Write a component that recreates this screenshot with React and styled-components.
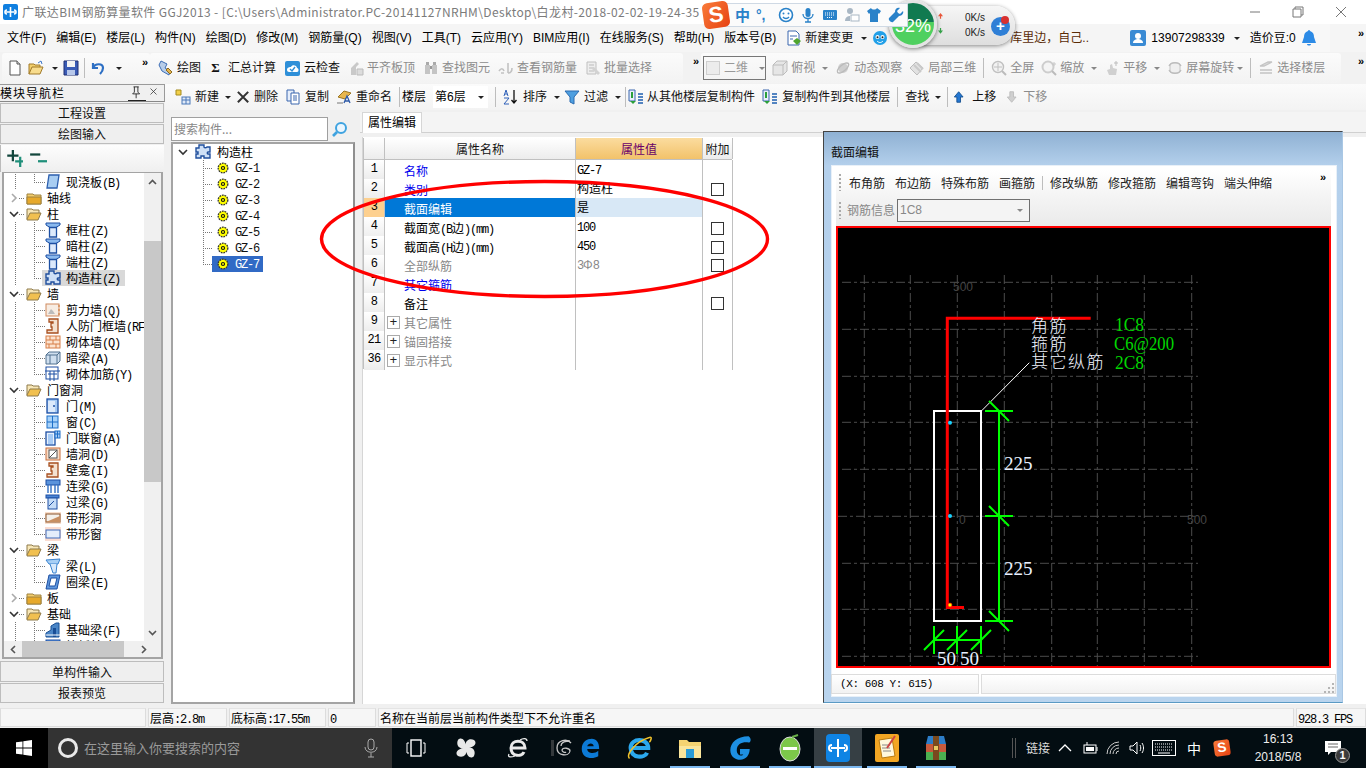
import React from 'react';
import styled, { createGlobalStyle } from 'styled-components';

const UI = '"Liberation Sans","Noto Sans CJK SC",sans-serif';
const CJK = '"Noto Sans CJK SC",sans-serif';

const Global = createGlobalStyle`
  html,body{margin:0;padding:0;width:1366px;height:768px;overflow:hidden;background:#f0f0f0;}
  *{box-sizing:border-box;}
`;

const Screen = styled.div`
  position:relative;width:1366px;height:768px;overflow:hidden;display:flex;flex-direction:column;
  font:12px/16px ${UI};color:#000;background:#f0f0f0;white-space:nowrap;
`;
const Latin = styled.span`font-family:"Liberation Mono",monospace;font-size:12px;letter-spacing:-1.2px;`;
const mix = (s) => s.split(/([\x00-\x7f]+)/).map((p, i) => (i % 2 ? <Latin key={i}>{p}</Latin> : p));

/* ---------- icons ---------- */
const Svg = styled.svg`flex:none;display:block;`;
const I = {
  file:<><path d="M3 1h7l3 3v11H3z" fill="#fff" stroke="#555"/><path d="M10 1v3h3" fill="#ddd" stroke="#555"/></>,
  open:<><path d="M1 14V4h5l1 1h5v2" fill="#f2cf6c" stroke="#a17a2a"/><path d="M1 14l3-7h11l-3 7z" fill="#f8dc8d" stroke="#a17a2a"/><path d="M10 3l3-2 1 3" fill="none" stroke="#3f78c9"/></>,
  save:<><path d="M1 1h14v14H1z" fill="#3a5bb5" stroke="#1f2f72"/><path d="M4 1h8v6H4z" fill="#f3f3f3"/><path d="M4 10h8v5H4z" fill="#b8c8ea"/></>,
  undo:<path d="M3 3v5h5M3 8c2-5 10-5 10 0 0 2-1 4-3 6" fill="none" stroke="#2d6fc4" strokeWidth="2.2"/>,
  draw:<><path d="M3 1l6 3-2 4 5 3-1 4-7-4-3-6z" fill="#b7cde9" stroke="#3b6cb4"/><path d="M10 8l4 4-2 2-4-4z" fill="#e3b34d" stroke="#8d6a1c"/></>,
  cloud:<><rect x="1" y="1" width="15" height="15" rx="2" fill="#2e8fd8"/><path d="M3 10c0-3 3-3 4-3 1-3 6-2 6 1 2 0 2 4 0 4H5c-1 0-2-1-2-2z" fill="#fff"/><path d="M6 9l2 2 3-4" fill="none" stroke="#2e8fd8" strokeWidth="1.4"/></>,
  align:<><path d="M3 15V8l6-6 2 2-3 3v8z" fill="#c9c9c9"/><path d="M9 9h6v6H9z" fill="#dcdcdc" stroke="#bbb"/></>,
  binoc:<><rect x="2" y="5" width="5" height="9" fill="#c4c4c4"/><rect x="9" y="5" width="5" height="9" fill="#c4c4c4"/><rect x="3" y="2" width="3" height="3" fill="#aaa"/><rect x="10" y="2" width="3" height="3" fill="#aaa"/><rect x="7" y="6" width="2" height="3" fill="#999"/></>,
  rebarq:<path d="M1 11c2-3 4-3 5 0M3 13h3M10 3v10M10 13c3 0 4-2 4-5" fill="none" stroke="#c2c2c2" strokeWidth="1.6"/>,
  batch:<><path d="M2 2h9v12H2z" fill="#eee" stroke="#c0c0c0"/><path d="M4 5h5M4 8h5M4 11h5" stroke="#bbb"/><path d="M9 7l6 6-2 2-6-6z" fill="#d2d2d2"/></>,
  cube:<><path d="M1 5l4-4h10v10l-4 4H1z" fill="#e6e6e6" stroke="#bcbcbc"/><path d="M1 5h10v10M11 5l4-4" fill="none" stroke="#bcbcbc"/></>,
  orbit:<><circle cx="8" cy="8" r="5" fill="#cfcfcf"/><ellipse cx="8" cy="8" rx="7" ry="3" transform="rotate(-40 8 8)" fill="none" stroke="#bbb" strokeWidth="1.4"/></>,
  local3d:<><path d="M1 8l6-6 7 6-6 7z" fill="#e2e2e2" stroke="#bcbcbc"/><path d="M5 5l7 7M8 3l6 6" stroke="#c9c9c9" strokeWidth="2"/></>,
  fit:<><circle cx="7" cy="7" r="5.5" fill="#f2f2f2" stroke="#c0c0c0" strokeWidth="1.4"/><path d="M7 3v8M3 7h8" stroke="#c0c0c0"/><path d="M11 11l4 4" stroke="#bbb" strokeWidth="2"/></>,
  zoom:<><circle cx="7" cy="7" r="5.5" fill="#f4f4f4" stroke="#cdcdcd" strokeWidth="2"/><path d="M11 11l4 4" stroke="#bbb" strokeWidth="2"/><path d="M13 2v4M11 4h4" stroke="#c8c8c8"/></>,
  pan:<><path d="M5 15l-2-5 3-1V5l2-1 1 4 4 1-1 6z" fill="#d0d0d0"/><path d="M12 1v5M10 3h4" stroke="#bdbdbd"/></>,
  rotate:<><rect x="3" y="3" width="10" height="10" rx="2" fill="#efefef" stroke="#c4c4c4"/><path d="M2 6a7 7 0 0 1 12 0M14 10a7 7 0 0 1-12 0" fill="none" stroke="#bcbcbc" strokeWidth="1.4"/></>,
  floors:<path d="M2 6l8-4h4l-8 4zM2 10h12M2 13h12M2 6h4" fill="#ddd" stroke="#c4c4c4" strokeWidth="1.3"/>,
  newc:<><path d="M1 1h5v5H1z" fill="#f2d04a" stroke="#a58b1d"/><rect x="7" y="8" width="8" height="7" fill="#dfe9f7" stroke="#4a78b8"/><path d="M7 11h8M11 8v7" stroke="#4a78b8"/></>,
  del:<path d="M2 2l11 11M13 2L2 13" stroke="#333" strokeWidth="2.2"/>,
  copy:<><path d="M2 1h7v11H2z" fill="#e6eefb" stroke="#3a67ae"/><path d="M6 4h8v11H6z" fill="#fff" stroke="#3a67ae"/><path d="M8 7h4M8 9h4M8 11h4" stroke="#3a67ae"/></>,
  rename:<><path d="M2 8l6-6 7 2-6 6z" fill="#e8b64d" stroke="#9a7420"/><path d="M8 14l3-7 3 7M9 12h4" fill="none" stroke="#2f5ba8" strokeWidth="1.3"/><path d="M1 14h6" stroke="#777"/></>,
  az:<><path d="M1 7l2-6 2 6M2 5h2M1 9h5l-5 6h5" fill="none" stroke="#2d5fb8"/><path d="M11 1v13M8.5 11l2.5 3 2.5-3" fill="none" stroke="#111" strokeWidth="1.3"/></>,
  funnel:<path d="M1 2h14l-5 6v7l-4-2V8z" fill="#4e9fe0" stroke="#2a6bb0"/>,
  cfrom:<><path d="M1 1h6v11H1z" fill="#e8eefb" stroke="#3a67ae"/><path d="M2 12l3 3 3-3" fill="#2a9f3a"/><path d="M10 5h5M10 8h5M10 11h5M10 14h5" stroke="#1e5fb0" strokeWidth="1.4"/><path d="M4 9V3" stroke="#2a9f3a" strokeWidth="2"/></>,
  up:<path d="M6.5 2l5 6H8.6v6H4.4V8H1.5z" fill="#2477d2" stroke="#16508f"/>,
  down:<path d="M4.4 2h4.2v6h2.9l-5 6-5-6h2.9z" fill="#cfcfcf" stroke="#bbb"/>,
  plusplus:<><path d="M2 5h10M7 0v10" stroke="#12463c" strokeWidth="2"/><path d="M9 10h9M13.5 6v9" stroke="#1f8f7a" strokeWidth="2"/></>,
  minus:<><path d="M1 4h9" stroke="#12463c" strokeWidth="2"/><path d="M8 10h9" stroke="#1f8f7a" strokeWidth="2"/></>,
  plate:<path d="M4 1h10l-2 13H2z" fill="#a8cdf2" stroke="#2c5fae" strokeWidth="1.3"/>,
  tcol:<><path d="M1 1h14v2L11 5.5H5L1 3z" fill="#8ab9ee" stroke="#1d4fa3"/><path d="M4.5 5.5h7V15h-7z" fill="#dce9fb" stroke="#1d4fa3" strokeWidth="1.3"/></>,
  puzzle:<path d="M4 1h5v2c0 1 2 1 3 0h3v5h-2c-1 0-1 2 0 2h2v4H9v-2H6v2H1v-4h2V8H1V4h3z" fill="#cfe0f6" stroke="#204f9d" strokeWidth="1.4"/>,
  shear:<><rect x="1" y="2" width="13" height="12" fill="#f7ece2" stroke="#d08a5f"/><path d="M3 12l3-5 2 2 2 3z" fill="#bbb"/><path d="M15 4h-2M15 8h-2M15 12h-2" stroke="#cc7430"/></>,
  frame:<path d="M4 1h9v14H2v-3h5V9H6V5h2V4H4z" fill="#f4e1d0" stroke="#a84f1f" strokeWidth="1.3"/>,
  brick:<><rect x="1" y="2" width="14" height="12" fill="#fce3cf" stroke="#d77f48"/><path d="M1 6h14M1 10h14M5 2v4M11 2v4M8 6v4M4 10v4M11 10v4" stroke="#d77f48"/></>,
  beam3d:<><path d="M1 5l3-3h11v9l-3 3H1z" fill="#cfdfef" stroke="#51718f"/><path d="M1 5h11v9M12 5l3-3M5 5v9" fill="none" stroke="#51718f"/></>,
  rebar:<><rect x="1" y="1" width="12" height="12" fill="none" stroke="#1d4fa3"/><path d="M0 5h15M5 5v10M9 5v10M3 8h9" stroke="#1d4fa3"/></>,
  door:<><rect x="2" y="1" width="11" height="14" fill="#a7cbf5" stroke="#1d4fa3" strokeWidth="1.3"/><rect x="3" y="3" width="7" height="11" fill="#dbe9fb"/><circle cx="9" cy="8" r="1" fill="#1d4fa3"/></>,
  win:<><rect x="2" y="2" width="11" height="12" fill="#a7d2fa" stroke="#1d6fc8"/><path d="M7.5 2v12M2 8h11" stroke="#1d6fc8"/></>,
  doorwin:<><rect x="1" y="2" width="9" height="13" fill="#e8f1fc" stroke="#1d4fa3" strokeWidth="1.3"/><rect x="3" y="4" width="5" height="10" fill="#a7cbf5"/><rect x="10" y="1" width="5" height="7" fill="#a7cbf5" stroke="#1d6fc8"/><path d="M10 4h5M12.5 1v7" stroke="#1d6fc8"/></>,
  hole:<><rect x="1" y="2" width="14" height="12" fill="#f9ddc8" stroke="#c86c3a"/><rect x="4" y="4" width="8" height="8" fill="#fff" stroke="#555"/><path d="M4 12l8-8" stroke="#555"/></>,
  lbeam:<><rect x="1" y="2" width="14" height="5" fill="#5a93dc" stroke="#1d4fa3"/><path d="M3 7v8M6 7v8M10 7v8M13 7v8" stroke="#3270c4" strokeWidth="1.4"/></>,
  obeam:<><rect x="1" y="1" width="13" height="3" fill="#4a85d6" stroke="#1d4fa3"/><rect x="3" y="4" width="9" height="11" fill="#c5dcf7" stroke="#1d4fa3"/><path d="M4 12l5-5" stroke="#1d4fa3"/></>,
  shole:<><rect x="0" y="2" width="16" height="12" fill="#f9dfcc"/><rect x="1" y="4" width="14" height="8" fill="#f4f0ea" stroke="#8a552c"/><path d="M1 12L15 6l0 6z" fill="#c88f62"/></>,
  swin:<><rect x="0" y="1" width="16" height="14" fill="#fbdcd0"/><rect x="1" y="4" width="14" height="8" fill="#e4eefb" stroke="#3e6dbb"/></>,
  lbm:<><path d="M1 2l14-1-2 5H4z" fill="#a7cff5" stroke="#3a83cf"/><path d="M5 6l3 9h3l1-9" fill="#d6e8fb" stroke="#3a83cf"/></>,
  ring:<><path d="M4 1h11l-3 14H1z" fill="#5f97dd" stroke="#1d4fa3"/><path d="M6 4h6l-2 8H4z" fill="#fff" stroke="#1d4fa3"/></>,
  found:<><path d="M1 15v-4l5-3V4l5-3h3v14z" fill="#4a85c6" stroke="#174f95"/><path d="M8 6h3v9H8z" fill="#184d96"/><path d="M1 13h14" stroke="#fff"/></>,
  fclosed:<><path d="M1 4h6l1 1h7v9H1z" fill="#f3cd6d" stroke="#9e8240"/><path d="M1 7h14v7H1z" fill="#e7a92b" stroke="#9e8240"/></>,
  fopen:<><path d="M1 13V3h5l1 1h6v3" fill="#f8e7b7" stroke="#8e7a4b"/><path d="M1 13l3-6h11l-3 7H1z" fill="#f1c050" stroke="#8e7a4b"/></>,
  gear:<><circle cx="8" cy="8" r="5.5" fill="#ff0" stroke="#333" strokeWidth="1.5" strokeDasharray="2 1"/><circle cx="8" cy="8" r="2.4" fill="#111"/><circle cx="8" cy="8" r="1.1" fill="#ff0"/></>,
  searchg:<><circle cx="9" cy="7" r="5" fill="#eaf6ff" stroke="#3fa3e0" strokeWidth="2"/><path d="M5 11l-4 4" stroke="#3fa3e0" strokeWidth="2.6"/></>,
  newdoc:<><path d="M2 1h8l3 3v11H2z" fill="#fff" stroke="#3a67ae"/><path d="M4 6h7M4 9h3" stroke="#3a67ae"/><path d="M11 8l4 3-4 4-4-4z" fill="#4fa52e"/></>,
  mascot:<><circle cx="8" cy="8" r="7" fill="#22a0e8"/><circle cx="5.5" cy="7" r="2" fill="#fff"/><circle cx="10.5" cy="7" r="2" fill="#fff"/><circle cx="5.5" cy="7.3" r="1" fill="#222"/><circle cx="10.5" cy="7.3" r="1" fill="#222"/><path d="M5 11c2 2 4 2 6 0" fill="none" stroke="#fff"/></>,
  user:<><rect x="0" y="0" width="16" height="16" rx="2" fill="#3a8bd4"/><circle cx="8" cy="6" r="3" fill="#fff"/><path d="M3 13c0-3 3-4 5-4s5 1 5 4z" fill="#fff"/></>,
  bell:<path d="M8 0c1 0 1 1 1 1 3 1 4 3 4 6l2 6H1l2-6c0-3 1-5 4-6 0 0 0-1 1-1zM6 14h4c0 2-4 2-4 0z" fill="#2d8be6"/>,
  pin:<path d="M4 1h6M5 1v6l-2 2h8L9 7V1M7 9v5" fill="none" stroke="#222"/>,
  x:<path d="M2 2l8 8M10 2l-8 8" stroke="#333"/>,
  smile:<><circle cx="8" cy="8" r="6.5" fill="#fff" stroke="#2a82c9" strokeWidth="1.6"/><circle cx="5.5" cy="6.5" r="1" fill="#2a82c9"/><circle cx="10.5" cy="6.5" r="1" fill="#2a82c9"/><path d="M5 10c1.5 2 4.5 2 6 0" fill="none" stroke="#2a82c9" strokeWidth="1.3"/></>,
  micb:<><rect x="5.5" y="1" width="5" height="9" rx="2.5" fill="#2a82c9"/><path d="M3 7c0 6 10 6 10 0M8 12v3M5 15h6" fill="none" stroke="#2a82c9" strokeWidth="1.3"/></>,
  kbd:<><rect x="1" y="3" width="14" height="10" rx="1" fill="#2a82c9"/><path d="M3 6h10M3 8h10M5 10.5h6" stroke="#fff" strokeDasharray="1 1"/></>,
  person:<><circle cx="6" cy="4" r="3" fill="#a9b7c4"/><path d="M1 14c0-4 3-5 5-5v5z" fill="#a9b7c4"/><rect x="7" y="8" width="8" height="6" fill="#fff" stroke="#a9b7c4"/></>,
  shirt:<path d="M5 1L1 4l2 3 1-1v9h8V6l1 1 2-3-4-3c-1 2-5 2-6 0z" fill="#2a82c9"/>,
  wrench:<path d="M15 4l-3 3-2-1-1-2 3-3C9 0 7 2 7 5L1 11c-1 2 2 5 4 4l6-6c3 0 5-3 4-5z" fill="#2a82c9"/>,
  upr:<path d="M4 0l4 5H5v4H3V5H0z" fill="#e8563a"/>,
  dng:<path d="M3 0h2v4h3L4 9 0 4h3z" fill="#36a24a"/>,
};
const Ic = ({ n, s = 16 }) => <Svg width={s} height={s} viewBox="0 0 16 16">{I[n]}</Svg>;

/* ---------- title / menu ---------- */
const TitleBar = styled.header`
  height:24px;background:#fff;display:flex;align-items:center;padding-left:3px;flex:none;
`;
const AppLogo = styled.svg`flex:none;width:15px;height:16px;`;
const TitleText = styled.div`margin-left:4px;color:#7b7b7b;font:12px/16px ${CJK};flex:1;overflow:hidden;letter-spacing:.38px;`;
const WinBtns = styled.div`display:flex;width:138px;flex:none;justify-content:space-between;padding:0 19px 0 21px;align-items:center;`;
const MenuBar = styled.nav`
  height:28px;background:#f5f5f5;display:flex;align-items:center;padding-left:7px;gap:10px;flex:none;
`;
const MenuItem = styled.span`flex:none;`;
const Fill = styled.div`flex:1;`;
const MascotSlot = styled.span`margin-left:-5px;flex:none;`;
const Notice = styled.span`color:#5a2b06;margin-left:112px;width:88px;overflow:hidden;flex:none;`;
const Account = styled.div`
  display:flex;align-items:center;gap:5px;margin-left:22px;width:200px;height:28px;background:#f8f8f8;flex:none;
`;
const Caret = styled.i`
  display:inline-block;flex:none;width:0;height:0;border:3px solid transparent;border-top:3.5px solid ${p => p.$dim ? '#888' : '#222'};border-bottom:0;margin-left:${p => p.$ml ?? 5}px;
`;
const More = styled.span`font:bold 11px/10px ${UI};align-self:flex-start;margin-top:${p => p.$mt ?? 4}px;flex:none;letter-spacing:-1px;margin-right:${p => p.$mr ?? 0}px;`;

/* ---------- toolbars ---------- */
const TopToolbar = styled.div`height:32px;flex:none;display:flex;align-items:center;background:#f2f2f2;padding-left:2px;`;
const Group = styled.div`
  display:flex;align-items:center;height:30px;border-radius:3px;flex:none;width:${p => p.$w}px;padding-left:${p => p.$pl ?? 0}px;gap:${p => p.$gap ?? 7}px;
  background:linear-gradient(#fbfbfb,#f3f3f3);
`;
const Tool = styled.span`display:flex;align-items:center;gap:${p => p.$gap ?? 3}px;flex:none;margin-left:${p => p.$ml ?? 0}px;color:${p => p.$dim ? '#8c8c8c' : '#111'};`;
const Sep = styled.i`width:1px;height:${p => p.$h ?? 20}px;background:#bdbdbd;flex:none;margin:0 ${p => p.$m ?? 0}px;`;
const Gap = styled.i`width:${p => p.$w}px;flex:none;`;
const Sigma = styled.span`font:bold 13px/16px "Liberation Serif",serif;width:13px;text-align:center;`;
const ViewSelect = styled.span`
  display:flex;align-items:center;width:63px;height:24px;border:1px solid #777;padding-left:2px;gap:4px;color:#999;margin-right:-1px;flex:none;
`;
const ViewSwatch = styled.i`width:15px;height:14px;background:#ececec;border:1px solid #cfcfcf;`;

const Workspace = styled.div`flex:1;display:grid;grid-template-columns:165px 1fr;min-height:0;`;

/* ---------- nav ---------- */
const NavPanel = styled.aside`display:flex;flex-direction:column;min-height:0;padding-bottom:3px;`;
const NavHead = styled.div`
  height:18px;border:1px solid #9a9a9a;border-left:0;border-bottom:1px solid #888;display:flex;align-items:center;font:12px/16px ${CJK};letter-spacing:1px;background:#f0f0f0;flex:none;
`;
const NavPin = styled.span`margin-left:auto;width:18px;height:15px;border-bottom:1px solid #222;display:flex;justify-content:center;flex:none;`;
const NavClose = styled.span`width:18px;display:flex;justify-content:center;align-items:center;flex:none;`;
const NavBtn = styled.button`
  height:${p => p.$h ?? 21}px;margin:${p => p.$m ?? '1px 0 0'};border:1px solid #bdbdbd;background:#efefef;font:12px/16px ${CJK};padding:0;display:block;width:164px;flex:none;color:#111;
`;
const ExpandBar = styled.div`
  height:27px;margin-top:1px;width:164px;display:flex;gap:6px;align-items:center;padding-left:4px;background:linear-gradient(#fdfdfd,#efefef);border-left:1px solid #bbb;flex:none;
`;
const NavTreeBox = styled.div`
  flex:1;min-height:0;margin:0 2px 0 2px;border:2px solid #a4a4a4;border-top:1px solid #a4a4a4;display:flex;flex-direction:column;background:#fff;
`;
const NavTreeArea = styled.div`flex:1;min-height:0;display:flex;`;
const Viewport = styled.div`flex:1;overflow:hidden;padding-top:1px;min-width:0;`;
const VBar = styled.div`width:17px;background:#f0f0f0;display:flex;flex-direction:column;align-items:center;flex:none;`;
const Arrow = styled.span`height:${p => p.$h ?? 17}px;width:${p => p.$w ? p.$w + 'px' : 'auto'};display:flex;align-items:center;justify-content:center;flex:none;`;
const VThumb = styled.div`width:100%;height:241px;margin-top:51px;margin-bottom:auto;background:#c8c8c8;`;
const HBar = styled.div`height:16px;background:#f0f0f0;display:flex;align-items:center;flex:none;`;
const HThumb = styled.div`height:100%;width:102px;margin-left:1px;background:#c8c8c8;`;

const dot = 'repeating-linear-gradient(to bottom,#777 0 1px,transparent 1px 2px)';
const hdot = 'repeating-linear-gradient(to right,#777 0 1px,transparent 1px 2px)';
const Row = styled.div`
  height:16px;display:flex;align-items:center;flex:none;
  padding-left:${p => p.$level ? 41 : 5}px;
  background-repeat:no-repeat;
  background-image:${p => p.$level ? `${dot},${dot},${hdot}` : hdot};
  background-size:${p => p.$level ? `1px 100%,1px ${p.$last ? '9px' : '100%'},11px 1px` : '5px 1px'};
  background-position:${p => p.$level ? '11px 0,30px 0,30px 8px' : '15px 8px'};
`;
const Chevron = styled.svg`width:10px;height:10px;flex:none;margin-right:7px;`;
const RowLabel = styled.span`
  padding:0 2px;height:16px;line-height:16px;font-family:${CJK};
`;
const SelBg = styled.span`display:flex;align-items:center;gap:3px;height:16px;padding-right:3px;background:${p => p.$sel ? '#d9d9d9' : 'none'};margin-left:-3px;padding-left:3px;`;

const NAV = [
  [1,'现浇板(B)','plate',1],[0,'轴线','fclosed'],[0,'柱','fopen'],[1,'框柱(Z)','tcol'],[1,'暗柱(Z)','tcol'],[1,'端柱(Z)','tcol'],[1,'构造柱(Z)','puzzle',1,1],
  [0,'墙','fopen'],[1,'剪力墙(Q)','shear'],[1,'人防门框墙(RF','frame'],[1,'砌体墙(Q)','brick'],[1,'暗梁(A)','beam3d'],[1,'砌体加筋(Y)','rebar',1],
  [0,'门窗洞','fopen'],[1,'门(M)','door'],[1,'窗(C)','win'],[1,'门联窗(A)','doorwin'],[1,'墙洞(D)','hole'],[1,'壁龛(I)','frame'],[1,'连梁(G)','lbeam'],[1,'过梁(G)','obeam'],[1,'带形洞','shole'],[1,'带形窗','swin',1],
  [0,'梁','fopen'],[1,'梁(L)','lbm'],[1,'圈梁(E)','ring',1],[0,'板','fclosed'],[0,'基础','fopen'],[1,'基础梁(F)','found'],[1,'筏板基础(M)','lbeam'],
];
const ChevOpen = () => <Chevron viewBox="0 0 10 10"><path d="M1 3l4 4 4-4" fill="none" stroke="#333" strokeWidth="1.6"/></Chevron>;
const ChevClosed = () => <Chevron viewBox="0 0 10 10"><path d="M3 1l4 4-4 4" fill="none" stroke="#aaa" strokeWidth="1.6"/></Chevron>;

/* ---------- middle tree ---------- */
const Content = styled.div`display:flex;flex-direction:column;min-height:0;min-width:0;`;
const CompToolbar = styled.div`
  height:26px;flex:none;display:flex;align-items:center;gap:7px;padding-left:10px;background:linear-gradient(#fbfbfb,#f3f3f3);
`;
const FloorCombo = styled.span`display:flex;align-items:center;width:55px;height:22px;background:#fff;padding-left:2px;flex:none;justify-content:space-between;padding-right:4px;`;
const FloorLabel = styled.span`margin-left:-5px;flex:none;`;
const Panes = styled.div`flex:1;min-height:0;display:flex;`;
const TreePane = styled.section`width:195px;flex:none;display:flex;flex-direction:column;padding:7px 5px 2px 6px;`;
const SearchRow = styled.div`height:24px;display:flex;align-items:center;gap:4px;flex:none;`;
const SearchInput = styled.div`
  width:157px;height:24px;background:#fff;border:1px solid #9f9f9f;padding-left:2px;color:#888;font:12px/22px ${CJK};flex:none;
`;
const TreeBox = styled.div`
  flex:1;margin-top:1px;border:2px solid #a4a4a4;border-right-color:#8f8f8f;background:#fff;width:184px;
`;
const CRow = styled.div`
  height:16px;display:flex;align-items:center;padding-left:${p => p.$child ? 39 : 5}px;
  background-repeat:no-repeat;
  background-image:${p => p.$child ? `${dot},${hdot}` : 'none'};
  background-size:${p => p.$child ? `1px ${p.$last ? '9px' : '100%'},10px 1px` : 'auto'};
  background-position:30px 0,30px 8px;
`;
const GroupLabel = styled.span`margin-left:6px;font-family:${CJK};`;
const GZLabel = styled.span`
  padding:0 4px 0 5px;height:16px;line-height:16px;background:${p => p.$sel ? '#316ac5' : 'none'};color:${p => p.$sel ? '#fff' : '#111'};
`;
const GZIcon = styled.span`
  display:flex;align-items:center;height:16px;background:${p => p.$sel ? '#316ac5' : 'none'};padding-left:4px;
`;

/* ---------- property pane ---------- */
const PropPane = styled.section`flex:1;min-width:0;display:flex;flex-direction:column;padding-top:2px;`;
const TabStrip = styled.div`height:21px;border-bottom:1px solid #d0d0d0;flex:none;display:flex;background:#f4f4f4;padding-left:2px;`;
const TabItem = styled.div`width:60px;height:21px;background:#fff;border:1px solid #d6d6d6;border-bottom:0;text-align:center;font:12px/18px ${CJK};`;
const PropBody = styled.div`flex:1;background:#fff;margin:4px 0 2px 2px;padding:1px 0 0 0;border-left:1px solid #d6d6d6;`;
const PropTable = styled.div`width:369px;display:flex;flex-direction:column;border-left:1px solid #c0c0c0;`;
const PRow = styled.div`display:grid;grid-template-columns:21px 191px 127px 30px;height:${p => p.$head ? 22 : 19}px;border-bottom:1px solid #c0c0c0;`;
const HCell = styled.div`
  border-right:1px solid #c0c0c0;text-align:center;line-height:21px;font-family:${CJK};
  background:${p => p.$hot ? 'linear-gradient(#fbdc9f,#f2c26a)' : 'linear-gradient(#fff,#ececec)'};
  color:${p => p.$hot ? '#6a006a' : '#111'};
`;
const NumCell = styled.div`
  border-right:1px solid #c0c0c0;text-align:center;line-height:18px;font-size:12px;font-family:"Liberation Mono",monospace;letter-spacing:-.6px;
  background:${p => p.$sel ? '#fdd08f' : 'linear-gradient(#fff,#ececec)'};
`;
const NameCell = styled.div`
  border-right:1px solid #c0c0c0;line-height:19px;padding-left:${p => p.$exp ? 2 : 19}px;padding-top:1px;font-family:${CJK};display:flex;align-items:center;gap:4px;
  background:${p => p.$sel ? '#0078d7' : '#fff'};
  color:${p => p.$sel ? '#fff' : p.$tone === 'link' ? '#0000ee' : p.$tone === 'grey' ? '#888' : '#000'};
`;
const ValCell = styled.div`
  border-right:1px solid #c0c0c0;line-height:18px;padding-left:1px;font-family:${CJK};
  background:${p => p.$sel ? '#d8e8f6' : '#fff'};color:${p => p.$grey ? '#888' : '#000'};
`;
const AddCell = styled.div`border-right:1px solid #c0c0c0;display:flex;align-items:center;justify-content:center;background:#fff;`;
const Check = styled.i`width:13px;height:13px;border:1px solid #333;background:#fff;display:block;`;
const Expand = styled.i`
  width:13px;height:13px;border:1px solid #aaa;font:normal 13px/11px "Liberation Mono",monospace;text-align:center;color:#222;display:block;
`;

/* ---------- status + taskbar ---------- */
const StatusBar = styled.footer`height:22px;flex:none;display:flex;gap:2px;padding:2px 0 1px;background:#f0f0f0;font-family:${CJK};`;
const SCell = styled.div`
  width:${p => p.$w}px;flex:${p => p.$grow ? 1 : 'none'};border:1px solid #dcdcdc;border-top-color:#e4e4e4;background:#f6f6f6;padding-left:1px;line-height:17px;overflow:hidden;
`;
const Taskbar = styled.footer`height:40px;flex:none;display:flex;align-items:center;background:#030d12;color:#e6e6e6;`;
const Start = styled.div`width:48px;height:40px;background:#000;display:flex;align-items:center;justify-content:center;flex:none;`;
const SearchBox = styled.div`
  width:344px;height:40px;background:#333;display:flex;align-items:center;padding-left:10px;color:#9a9a9a;font:13px/16px ${CJK};flex:none;
`;
const Cortana = styled.i`width:20px;height:20px;border:3px solid #e8e8e8;border-radius:50%;margin-right:6px;flex:none;`;
const MicSlot = styled.span`margin-left:auto;margin-right:14px;display:flex;`;
const TaskIcons = styled.div`display:flex;align-items:center;height:40px;flex:none;`;
const TaskSlot = styled.span`
  width:${p => p.$w}px;height:40px;margin-left:${p => p.$ml ?? 0}px;display:flex;align-items:center;justify-content:center;flex:none;
  background:${p => p.$active ? '#363f44' : 'transparent'};
  box-shadow:${p => p.$open ? 'inset 0 -2px 0 #7cb8f0' : 'none'};
`;
const Tray = styled.div`margin-left:auto;display:flex;align-items:center;height:40px;flex:none;padding-right:11px;`;
const TrayBar = styled.i`width:4px;height:20px;border-left:1px solid #555;border-right:1px solid #555;margin-right:10px;flex:none;`;
const TrayLabel = styled.span`font:12px/16px ${CJK};color:#ddd;flex:none;`;
const TrayChar = styled(TrayLabel)`color:#fff;font-size:14px;`;
const TrayIcon = styled.span`width:${p => p.$w ?? 24}px;display:flex;align-items:center;justify-content:center;flex:none;color:#fff;`;
const Clock = styled.div`width:66px;text-align:center;font:12px/18px ${UI};color:#eee;flex:none;margin-left:9px;`;
const Notify = styled.div`width:44px;height:40px;position:relative;display:flex;align-items:center;justify-content:center;flex:none;`;
const NotifyBadge = styled.span`
  position:absolute;right:5px;bottom:5px;width:15px;height:15px;border-radius:50%;background:#3b3b3b;border:1px solid #999;color:#fff;font:bold 11px/13px ${UI};text-align:center;
`;
const SLogo = styled.span`
  width:${p => p.$s}px;height:${p => p.$s}px;border-radius:${p => p.$s / 5}px;background:linear-gradient(135deg,#f97b3a,#e64212);color:#fff;font:bold ${p => p.$s * .85}px/${p => p.$s}px ${UI};text-align:center;display:block;flex:none;transform:rotate(-8deg);
`;

/* ---------- overlays ---------- */
const Sogou = styled.div`
  position:absolute;left:722px;top:3px;width:186px;height:24px;background:#fbfbfb;border:1px solid #cfd9e4;display:flex;align-items:center;gap:6px;padding-left:12px;z-index:5;
`;
const SogouLogo = styled.div`position:absolute;left:-20px;top:-2px;`;
const SogouText = styled.span`font:bold 15px/18px ${CJK};color:#2a82c9;flex:none;`;
const SogouPunct = styled.span`font:bold 14px/14px ${UI};color:#2a82c9;flex:none;width:16px;`;
const NetPill = styled.div`
  position:absolute;left:905px;top:6px;width:110px;height:39px;border-radius:20px;background:linear-gradient(#f6f6f6,#dedede);box-shadow:0 1px 4px rgba(0,0,0,.45);z-index:3;
  display:grid;grid-template-columns:14px 33px;grid-auto-rows:15px;align-content:center;padding-left:33px;align-items:center;font:10px/14px ${UI};color:#222;
`;
const NetVal = styled.span`text-align:right;`;
const NetBall = styled.div`
  position:absolute;left:889px;top:0;width:48px;height:48px;border-radius:50%;border:3px solid #e4e4e4;z-index:4;box-shadow:0 1px 4px rgba(0,0,0,.5);
  background:linear-gradient(#117a50 0 45%,#4fd05f 45% 100%);color:#fff;font:18px/46px ${UI};text-align:center;overflow:hidden;
`;
const NetPlus = styled.div`
  position:absolute;left:991px;top:17px;width:19px;height:19px;border-radius:50%;background:#2f7fd6;color:#fff;font:bold 15px/18px ${UI};text-align:center;z-index:4;
`;
const NetDot = styled.div`position:absolute;left:1001px;top:16px;width:8px;height:8px;border-radius:50%;background:#d83030;z-index:5;`;
const Annotation = styled.svg`position:absolute;left:315px;top:175px;width:460px;height:130px;pointer-events:none;z-index:2;`;

const SectionWin = styled.div`
  position:absolute;left:823px;top:131px;width:520px;height:572px;border:1px solid #444;border-bottom-color:#5a9ac4;border-right-color:#a9c7e4;
  background:linear-gradient(#8fb1d3,#b4d0ec 34px,#b9d4ee);z-index:3;display:flex;flex-direction:column;padding:12px 5px 5px 7px;
`;
const WinTitle = styled.div`font:12px/16px ${CJK};height:21px;flex:none;color:#111;`;
const WinBody = styled.div`flex:1;min-height:0;background:#fff;border:1px solid #e8f0f8;display:flex;flex-direction:column;padding:4px 5px 0 4px;`;
const EditBar = styled.div`height:27px;flex:none;display:flex;align-items:center;gap:10px;background:linear-gradient(#fff,#f4f4f4);padding:0 0 2px 3px;position:relative;`;
const Grip = styled.i`width:2px;height:17px;flex:none;background:repeating-linear-gradient(to bottom,#aaa 0 2px,transparent 2px 4px);margin-right:-2px;`;
const InfoBar = styled.div`
  height:29px;flex:none;display:flex;align-items:center;background:linear-gradient(#f4f4f4,#eaeaea);padding:0 0 3px 3px;gap:8px;color:#888;font-family:${CJK};
`;
const InfoSelect = styled.span`
  width:133px;height:23px;border:1px solid #707070;background:#f4f4f4;display:flex;align-items:center;justify-content:space-between;padding:0 6px 0 2px;margin-left:-6px;font-family:${UI};color:#888;
`;
const EditItem = styled.span`flex:none;font-family:${CJK};color:#222;`;
const EditMore = styled.span`position:absolute;right:6px;top:2px;font:bold 11px/10px ${UI};letter-spacing:-1px;`;
const Canvas = styled.div`height:442px;flex:none;border:2px solid #f00;background:#000;`;
const CanvasSvg = styled.svg`display:block;width:492px;height:438px;`;
const WinStatus = styled.div`flex:1;display:flex;gap:2px;padding:6px 0 2px 0;margin:0 -5px 0 -5px;`;
const WinCell = styled.div`
  height:20px;border:1px solid #dcdcdc;background:linear-gradient(#fff,#f2f2f2);width:${p => p.$w}px;flex:${p => p.$grow ? 1 : 'none'};font:11px/17px "Liberation Mono",monospace;padding-left:8px;letter-spacing:-.4px;
  display:flex;align-items:flex-end;justify-content:space-between;
`;

/* ---------- canvas ---------- */
const gridV = [864.3, 910.3, 957.3, 1004.3, 1051.7, 1097.3, 1144.3, 1191.7];
const gridH = [282.3, 329.3, 376.3, 422.3, 469.3, 516.3, 563.3, 609.3, 656.3];
const GStroke = '#4c4c4c';
const SectionDrawing = () => (
  <CanvasSvg viewBox="838 228 492 438" fontFamily='"Liberation Serif","Noto Sans CJK SC",serif'>
    {gridV.map((x) => <line key={x} x1={x} x2={x} y1={275} y2={666} stroke={GStroke} strokeDasharray="9 3 3 3"/>)}
    {gridH.map((y) => <line key={y} x1={y === 516.3 ? 838 : 842} x2={1198} y1={y} y2={y} stroke={GStroke} strokeDasharray="9 3 3 3"/>)}
    <g fill="#444" fontFamily='"Liberation Sans",sans-serif' fontSize="12">
      <text x="953" y="291">500</text><text x="959" y="524">0</text><text x="1187" y="524">500</text>
    </g>
    <line x1="1029.3" y1="362.7" x2="981.7" y2="410.7" stroke="#fff"/>
    <rect x="934" y="411" width="47" height="210" fill="none" stroke="#fff" strokeWidth="2"/>
    <path d="M1090.7 318.3H947.3V607.5H964" fill="none" stroke="#f00" strokeWidth="3"/>
    <circle cx="950" cy="422.7" r="2" fill="#19d3ff"/><circle cx="950" cy="516" r="2" fill="#19d3ff"/><circle cx="950" cy="605" r="2" fill="#ff0" stroke="#f00" strokeWidth=".6"/>
    <g stroke="#0f0" strokeWidth="2" fill="none">
      <path d="M999 411V621M985 411h28M985 516h28M985 621h28M989 401l20 20M989 506l20 20M989 611l20 20"/>
      <path d="M934 640H981M934 626v28M957 626v28M981 626v28M924 650l20-20M947 650l20-20M971 650l20-20"/>
    </g>
    <g fill="#e8f0ff" fontSize="19">
      <text x="1004" y="470">225</text><text x="1004" y="575">225</text>
      <text x="937" y="665">50</text><text x="960" y="665">50</text>
    </g>
    <g fill="#f0f4ff" fontSize="17" letterSpacing="1.5" fontFamily='"Noto Sans CJK SC",sans-serif' fontWeight="300">
      <text x="1031" y="332">角筋</text><text x="1031" y="350">箍筋</text><text x="1031" y="368">其它纵筋</text>
    </g>
    <g fill="#00d800" fontSize="19">
      <text x="1115" y="331" textLength="29" lengthAdjust="spacingAndGlyphs">1C8</text>
      <text x="1114" y="350" textLength="60" lengthAdjust="spacingAndGlyphs">C6@200</text>
      <text x="1115" y="369" textLength="29" lengthAdjust="spacingAndGlyphs">2C8</text>
    </g>
  </CanvasSvg>
);

const PROPS = [
  { n:'名称', t:'link', v:'GZ-7' },
  { n:'类别', t:'link', v:'构造柱', c:1 },
  { n:'截面编辑', v:'是', sel:1 },
  { n:'截面宽(B边)(mm)', v:'100', c:1 },
  { n:'截面高(H边)(mm)', v:'450', c:1 },
  { n:'全部纵筋', t:'grey', v:'3Φ8', g:1, c:1 },
  { n:'其它箍筋', t:'link', v:'' },
  { n:'备注', v:'', c:1 },
];
const GROUPS = [['9','其它属性'],['21','锚固搭接'],['36','显示样式']];

export default function App() {
  return (
    <Screen>
      <Global />
      <TitleBar>
        <AppLogo viewBox="0 0 15 16"><rect width="15" height="16" rx="2" fill="#0f7fe0"/><path d="M7.5 3v10M3 8h9M4 6a2 2 0 1 0 0 4M11 6a2 2 0 1 1 0 4" stroke="#fff" strokeWidth="1.6" fill="none"/></AppLogo>
        <TitleText>广联达BIM钢筋算量软件 GGJ2013 - [C:\Users\Administrator.PC-20141127NRHM\Desktop\白龙村-2018-02-02-19-24-35</TitleText>
        <WinBtns>
          <Svg width="12" height="12" viewBox="0 0 12 12"><path d="M1 6h10" stroke="#777"/></Svg>
          <Svg width="12" height="12" viewBox="0 0 12 12"><path d="M3 3V1h8v8H9M1 3h8v8H1z" fill="none" stroke="#777"/></Svg>
          <Svg width="12" height="12" viewBox="0 0 12 12"><path d="M1 1l10 10M11 1L1 11" stroke="#777"/></Svg>
        </WinBtns>
      </TitleBar>
      <MenuBar>
        {['文件(F)','编辑(E)','楼层(L)','构件(N)','绘图(D)','修改(M)','钢筋量(Q)','视图(V)','工具(T)','云应用(Y)','BIM应用(I)','在线服务(S)','帮助(H)','版本号(B)'].map((m) => <MenuItem key={m}>{m}</MenuItem>)}
        <Tool $gap={3}><Ic n="newdoc"/>新建变更<Caret/></Tool>
        <MascotSlot><Ic n="mascot"/></MascotSlot>
        <Notice>库里边，自己..</Notice>
        <Account>
          <Ic n="user"/>13907298339<Caret $ml={4}/><Gap $w={0}/>造价豆:0<Ic n="bell"/>
        </Account>
        <Fill/><More $mt={4} $mr={3}>»</More>
      </MenuBar>
      <TopToolbar>
        <Group $w={148} $pl={5} $gap={5}>
          <Ic n="file"/><Ic n="open"/><Caret $ml={3}/><Ic n="save"/><Sep/><Ic n="undo"/><Caret/><Gap $w={10}/><More>»</More>
        </Group>
        <Group $w={533} $pl={8} $gap={8}>
          <Tool><Ic n="draw"/>绘图</Tool>
          <Tool $gap={6}><Sigma>Σ</Sigma>汇总计算</Tool>
          <Tool $gap={4}><Ic n="cloud"/>云检查</Tool>
          <Tool $dim><Ic n="align"/>平齐板顶</Tool>
          <Tool $dim><Ic n="binoc"/>查找图元</Tool>
          <Tool $dim><Ic n="rebarq"/>查看钢筋量</Tool>
          <Tool $dim><Ic n="batch"/>批量选择</Tool>
        </Group>
        <Gap $w={10}/><More>»</More><Gap $w={3}/>
        <Group $w={640} $pl={2} $gap={7}>
          <ViewSelect><ViewSwatch/>二维<Caret $dim $ml={7}/></ViewSelect>
          <Tool $dim><Ic n="cube"/>俯视<Caret $dim $ml={4}/></Tool>
          <Tool $dim><Ic n="orbit"/>动态观察</Tool>
          <Tool $dim><Ic n="local3d"/>局部三维</Tool>
          <Sep/>
          <Tool $dim><Ic n="fit"/>全屏</Tool>
          <Tool $dim><Ic n="zoom"/>缩放<Caret $dim $ml={4}/></Tool>
          <Tool $dim><Ic n="pan"/>平移<Caret $dim $ml={4}/></Tool>
          <Tool $dim><Ic n="rotate"/>屏幕旋转<Caret $dim $ml={0}/></Tool>
          <Sep/>
          <Tool $dim><Ic n="floors"/>选择楼层</Tool>
        </Group>
        <Fill/><More $mr={3}>»</More>
      </TopToolbar>
      <Workspace>
        <NavPanel>
          <NavHead>模块导航栏<NavPin><Ic n="pin" s={14}/></NavPin><NavClose><Ic n="x" s={12}/></NavClose></NavHead>
          <NavBtn $h={20}>工程设置</NavBtn>
          <NavBtn $h={20}>绘图输入</NavBtn>
          <ExpandBar><Ic n="plusplus" s={18}/><Ic n="minus" s={18}/></ExpandBar>
          <NavTreeBox>
            <NavTreeArea>
              <Viewport>
                {NAV.map(([lvl, label, icon, last, sel]) => (
                  <Row key={label} $level={lvl} $last={last}>
                    {!lvl && (icon === 'fopen' ? <ChevOpen/> : <ChevClosed/>)}
                    <SelBg $sel={sel}>
                      <Ic n={icon}/>
                      <RowLabel>{mix(label)}</RowLabel>
                    </SelBg>
                  </Row>
                ))}
              </Viewport>
              <VBar>
                <Arrow><Svg width="9" height="6" viewBox="0 0 9 6"><path d="M1 5l3.5-3.5L8 5" fill="none" stroke="#555" strokeWidth="1.6"/></Svg></Arrow>
                <VThumb/>
                <Arrow><Svg width="9" height="6" viewBox="0 0 9 6"><path d="M1 1l3.5 3.5L8 1" fill="none" stroke="#555" strokeWidth="1.6"/></Svg></Arrow>
              </VBar>
            </NavTreeArea>
            <HBar>
              <Arrow $h={16} $w={17}><Svg width="6" height="9" viewBox="0 0 6 9"><path d="M5 1L1.5 4.5 5 8" fill="none" stroke="#555" strokeWidth="1.6"/></Svg></Arrow>
              <HThumb/>
              <Fill/>
              <Arrow $h={16} $w={34}><Svg width="6" height="9" viewBox="0 0 6 9"><path d="M1 1l3.5 3.5L1 8" fill="none" stroke="#555" strokeWidth="1.6"/></Svg></Arrow>
            </HBar>
          </NavTreeBox>
          <NavBtn $h={21} $m="2px 0 0">单构件输入</NavBtn>
          <NavBtn $h={20}>报表预览</NavBtn>
        </NavPanel>
        <Content>
          <CompToolbar>
            <Tool $gap={4}><Ic n="newc"/>新建<Caret $ml={2}/></Tool>
            <Tool $gap={3} $ml={-2}><Ic n="del" s={15}/>删除</Tool>
            <Tool $gap={4}><Ic n="copy"/>复制</Tool>
            <Tool $gap={4}><Ic n="rename"/>重命名</Tool>
            <Sep/>
            <FloorLabel>楼层</FloorLabel>
            <FloorCombo>第6层<Caret/></FloorCombo>
            <Sep/>
            <Tool $gap={4}><Ic n="az"/>排序<Caret $ml={3}/></Tool>
            <Tool $gap={4} $ml={-3}><Ic n="funnel"/>过滤<Caret $ml={3}/></Tool>
            <Sep $m={-3}/>
            <Tool $gap={3} $ml={-2}><Ic n="cfrom"/>从其他楼层复制构件</Tool>
            <Tool $gap={4}><Ic n="cfrom"/>复制构件到其他楼层</Tool>
            <Sep/>
            <Tool>查找<Caret $ml={3}/></Tool>
            <Sep $m={-1}/>
            <Tool $gap={5} $ml={-1}><Ic n="up" s={14}/>上移</Tool>
            <Tool $dim $gap={3} $ml={3}><Ic n="down" s={14}/>下移</Tool>
          </CompToolbar>
          <Panes>
            <TreePane>
              <SearchRow>
                <SearchInput>搜索构件...</SearchInput>
                <Ic n="searchg"/>
              </SearchRow>
              <TreeBox>
                <CRow><ChevOpen/><Ic n="puzzle"/><GroupLabel>构造柱</GroupLabel></CRow>
                {[1,2,3,4,5,6,7].map((i) => (
                  <CRow $child key={i} $last={i===7}>
                    <GZIcon $sel={i===7}><Ic n="gear" s={14}/></GZIcon>
                    <GZLabel $sel={i===7}><Latin>GZ-{i}</Latin></GZLabel>
                  </CRow>
                ))}
              </TreeBox>
            </TreePane>
            <PropPane>
              <TabStrip><TabItem>属性编辑</TabItem></TabStrip>
              <PropBody>
                <PropTable>
                  <PRow $head>
                    <HCell/><HCell>属性名称</HCell><HCell $hot>属性值</HCell><HCell>附加</HCell>
                  </PRow>
                  {PROPS.map((p, i) => (
                    <PRow key={p.n}>
                      <NumCell $sel={p.sel}>{i+1}</NumCell>
                      <NameCell $sel={p.sel} $tone={p.t}><span>{mix(p.n)}</span></NameCell>
                      <ValCell $sel={p.sel} $grey={p.g}>{mix(p.v)}</ValCell>
                      <AddCell>{p.c && <Check/>}</AddCell>
                    </PRow>
                  ))}
                  {GROUPS.map(([num, name]) => (
                    <PRow key={num}>
                      <NumCell>{num}</NumCell>
                      <NameCell $exp $tone="grey"><Expand>+</Expand>{name}</NameCell>
                      <ValCell/>
                      <AddCell/>
                    </PRow>
                  ))}
                </PropTable>
              </PropBody>
            </PropPane>
          </Panes>
        </Content>
      </Workspace>
      <StatusBar>
        <SCell $w={146}/>
        <SCell $w={79}>{mix('层高:2.8m')}</SCell>
        <SCell $w={97}>{mix('底标高:17.55m')}</SCell>
        <SCell $w={48}><Latin>0</Latin></SCell>
        <SCell $grow>名称在当前层当前构件类型下不允许重名</SCell>
        <SCell $w={70}><Latin>928.3 FPS</Latin></SCell>
      </StatusBar>
      <Taskbar>
        <Start><Svg width="16" height="16" viewBox="0 0 16 16"><path d="M0 2.3l6.5-.9v6.2H0zM7.3 1.3L16 0v7.6H7.3zM0 8.4h6.5v6.2L0 13.7zM7.3 8.4H16V16l-8.7-1.2z" fill="#fff"/></Svg></Start>
        <SearchBox>
          <Cortana/>在这里输入你要搜索的内容
          <MicSlot><Svg width="14" height="20" viewBox="0 0 14 20"><rect x="4" y="1" width="6" height="11" rx="3" fill="none" stroke="#aaa"/><path d="M1 9c0 7 12 7 12 0M7 15v4M4 19h6" fill="none" stroke="#aaa"/></Svg></MicSlot>
        </SearchBox>
        <TaskIcons>
          <TaskSlot $w={48}><Svg width="20" height="18" viewBox="0 0 20 18"><rect x="5" y="1" width="10" height="16" fill="none" stroke="#fff" strokeWidth="1.4"/><path d="M3 4H1v10h2M17 4h2v10h-2" fill="none" stroke="#fff"/></Svg></TaskSlot>
          <TaskSlot $w={52}><Svg width="24" height="24" viewBox="0 0 24 24"><path d="M12 12C4 14 2 8 4 4c2-3 8-2 8 8zM12 12c-2-8 4-10 8-8 3 2 2 8-8 8zM12 12c8-2 10 4 8 8-2 3-8 2-8-8zM12 12c2 8-4 10-8 8-3-2-2-8 8-8z" fill="#e8e8e8"/></Svg></TaskSlot>
          <TaskSlot $w={52}><Svg width="24" height="24" viewBox="0 0 24 24"><path d="M5 12h14c0-9-14-9-14 0 0 9 11 9 13 4" fill="none" stroke="#eaeaea" strokeWidth="3"/><path d="M3 18c-2 4 3 3 6 2M21 5c0-3-4-3-7-1" fill="none" stroke="#eaeaea" strokeWidth="1.3"/></Svg></TaskSlot>
          <TaskSlot $w={26} $ml={6}><Svg width="24" height="24" viewBox="0 0 24 24"><path d="M2 4v16M0 4v16" stroke="#666"/><path d="M20 7c-4-5-14-3-14 5 0 8 12 9 13 3 0-3-7-4-8-1 0 2 3 3 4 2M19 5c-4 0-9 1-9 5" fill="none" stroke="#c8c8c8" strokeWidth="1.3"/></Svg></TaskSlot>
          <TaskSlot $w={28}><Svg width="22" height="24" viewBox="0 0 24 24"><path d="M3 13C3 5 9 2 14 2c5 0 8 4 8 11H9c0 5 8 6 12 2v6c-7 4-18 2-18-8zm6-3h7c0-4-6-4-7 0z" fill="#0c7ad6"/></Svg></TaskSlot>
          <TaskSlot $w={50} $ml={11}><Svg width="28" height="28" viewBox="0 0 24 24"><path d="M4 12h15c0-9-15-9-15 0 0 9 12 9 14 4" fill="none" stroke="#2ba8ee" strokeWidth="3.6"/><path d="M3 21c-3-3 4-14 17-18 3-1 1 3 0 4" fill="none" stroke="#f0c22c" strokeWidth="1.3"/></Svg></TaskSlot>
          <TaskSlot $w={40} $ml={5} $open><Svg width="24" height="22" viewBox="0 0 24 22"><path d="M1 3h8l2 2h12v16H1z" fill="#f5d372"/><path d="M1 9h22v12H1z" fill="#fbe59c"/><rect x="8" y="12" width="8" height="9" fill="#2a9bd8"/></Svg></TaskSlot>
          <TaskSlot $w={40} $ml={10} $open><Svg width="26" height="28" viewBox="0 0 24 26"><path d="M20 2C9 2 3 8 3 15c0 6 5 9 9 9 6 0 9-5 9-10h-9v5h3c-1 2-6 1-6-4 0-6 6-8 11-7 2 0 3-4 0-6z" fill="#1d8fe2"/></Svg></TaskSlot>
          <TaskSlot $w={42} $ml={9} $open><Svg width="24" height="28" viewBox="0 0 24 28"><ellipse cx="12" cy="15" rx="10" ry="12" fill="#7cc74a" stroke="#ddd"/><rect x="5" y="13" width="14" height="3" fill="#fff"/><path d="M14 3l6-2" stroke="#6ab04a" strokeWidth="2"/></Svg></TaskSlot>
          <TaskSlot $w={48} $ml={3} $active $open><Svg width="24" height="28" viewBox="0 0 24 28"><rect width="24" height="28" rx="4" fill="#0f84e4"/><path d="M12 5v18M5 14h14M6 11a3 3 0 1 0 0 6M18 11a3 3 0 1 1 0 6" stroke="#fff" strokeWidth="2" fill="none"/></Svg></TaskSlot>
          <TaskSlot $w={40} $ml={5} $open><Svg width="24" height="28" viewBox="0 0 24 28"><rect width="24" height="28" rx="2" fill="#f2a623"/><path d="M4 6l13-2 3 18-13 2z" fill="#fff8dc" stroke="#b87a10"/><path d="M7 11h8M7 14h8M8 17h8" stroke="#888"/><path d="M20 2l-8 12" stroke="#c44" strokeWidth="2"/></Svg></TaskSlot>
          <TaskSlot $w={40} $ml={9} $open><Svg width="22" height="28" viewBox="0 0 22 28"><path d="M3 2h16l2 8H1z" fill="#2d7dc8"/><rect x="1" y="10" width="20" height="8" fill="#c85a3c"/><rect x="1" y="18" width="20" height="8" fill="#4caf50"/><rect x="8" y="2" width="6" height="24" fill="#7a4a1e"/><rect x="9" y="12" width="4" height="4" fill="#e8c860"/></Svg></TaskSlot>
        </TaskIcons>
        <Tray>
          <TrayBar/>
          <TrayLabel>链接</TrayLabel>
          <TrayIcon $w={30}><Svg width="14" height="8" viewBox="0 0 14 8"><path d="M1 7l6-6 6 6" fill="none" stroke="#fff" strokeWidth="1.3"/></Svg></TrayIcon>
          <TrayIcon $w={22}><Svg width="16" height="14" viewBox="0 0 16 14"><rect x="1" y="4" width="12" height="8" fill="none" stroke="#fff"/><rect x="3" y="6" width="8" height="4" fill="#fff"/><path d="M14 6v4M4 1v3" stroke="#fff"/></Svg></TrayIcon>
          <TrayIcon $w={24}><Svg width="16" height="14" viewBox="0 0 16 14"><path d="M1 13a12 12 0 0 1 12-12M4 13a9 9 0 0 1 9-9M7 13a6 6 0 0 1 6-6M10 13a3 3 0 0 1 3-3" fill="none" stroke="#ccc"/></Svg></TrayIcon>
          <TrayIcon $w={22}><Svg width="16" height="14" viewBox="0 0 16 14"><path d="M1 5h3l4-4v12l-4-4H1zM11 4c1 2 1 4 0 6M13 2c2 3 2 7 0 10" fill="none" stroke="#fff"/></Svg></TrayIcon>
          <TrayIcon $w={32}><Svg width="24" height="16" viewBox="0 0 24 16"><rect x=".5" y=".5" width="23" height="15" fill="none" stroke="#fff"/><path d="M3 4h18M3 7h18M3 10h18" stroke="#fff" strokeDasharray="1 1"/><path d="M6 13h12" stroke="#fff"/></Svg></TrayIcon>
          <TrayIcon $w={28}><TrayChar>中</TrayChar></TrayIcon>
          <TrayIcon $w={28}><SLogo $s={16}>S</SLogo></TrayIcon>
          <Clock>16:13<br/>2018/5/8</Clock>
          <Notify>
            <Svg width="16" height="14" viewBox="0 0 16 14"><path d="M0 0h16v11H6l-3 3v-3H0z" fill="#fff"/><path d="M3 3h10M3 6h10" stroke="#666"/></Svg>
            <NotifyBadge>1</NotifyBadge>
          </Notify>
        </Tray>
      </Taskbar>

      <Annotation viewBox="315 175 460 130"><ellipse cx="544.5" cy="239" rx="223" ry="57.5" fill="none" stroke="#f00" strokeWidth="3.4"/></Annotation>

      <NetPill>
        <span><Ic n="upr" s={10}/></span><NetVal>0K/s</NetVal>
        <span><Ic n="dng" s={10}/></span><NetVal>0K/s</NetVal>
      </NetPill>
      <NetBall>32%</NetBall>
      <NetPlus>+</NetPlus>
      <NetDot/>
      <Sogou>
        <SogouLogo><SLogo $s={26}>S</SLogo></SogouLogo>
        <SogouText>中</SogouText><SogouPunct>°,</SogouPunct>
        <Ic n="smile"/><Ic n="micb"/><Ic n="kbd"/><Ic n="person"/><Ic n="shirt"/><Ic n="wrench"/>
      </Sogou>

      <SectionWin>
        <WinTitle>截面编辑</WinTitle>
        <WinBody>
          <EditBar>
            <Grip/>
            {['布角筋','布边筋','特殊布筋','画箍筋'].map((t) => <EditItem key={t}>{t}</EditItem>)}
            <Sep $h={14} $m={-3}/>
            {['修改纵筋','修改箍筋','编辑弯钩','端头伸缩'].map((t) => <EditItem key={t}>{t}</EditItem>)}
            <EditMore>»</EditMore>
          </EditBar>
          <InfoBar>
            <Grip/>钢筋信息
            <InfoSelect>1C8<Caret $dim/></InfoSelect>
          </InfoBar>
          <Canvas><SectionDrawing/></Canvas>
          <WinStatus>
            <WinCell $w={148}>(X: 608 Y: 615)</WinCell>
            <WinCell $grow><span/><Svg width="12" height="12" viewBox="0 0 12 12"><path d="M9 2h2v2H9zM5 6h2v2H5zM9 6h2v2H9zM1 10h2v2H1zM5 10h2v2H5zM9 10h2v2H9z" fill="#b5b5b5"/></Svg></WinCell>
          </WinStatus>
        </WinBody>
      </SectionWin>
    </Screen>
  );
}
